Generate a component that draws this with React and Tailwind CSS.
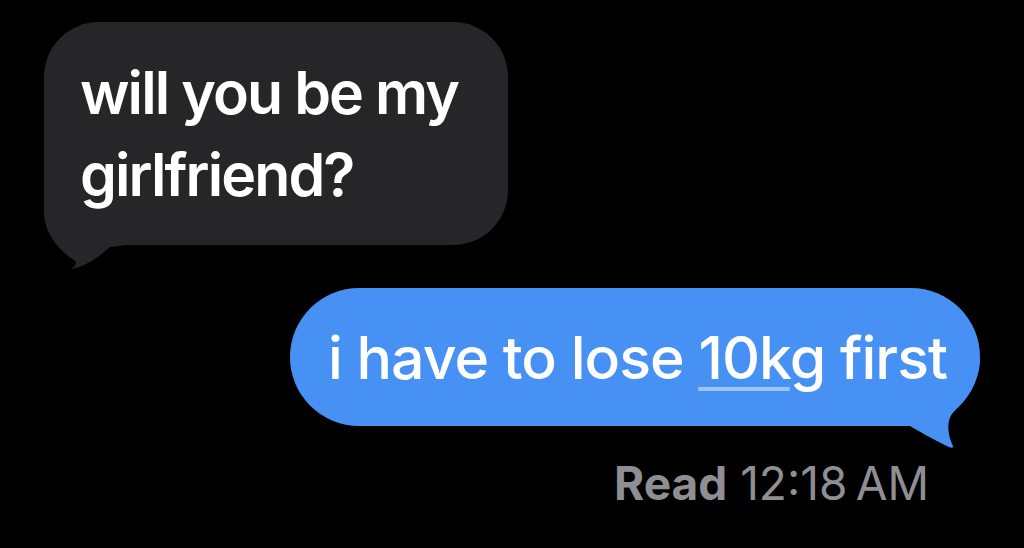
export default function App() {
  const font = { fontFamily: "Inter, 'Noto Sans', 'Liberation Sans', sans-serif" };
  return (
    <div className="w-[1024px] h-[548px] bg-black overflow-hidden flex flex-col" style={font}>
      <div className="pl-[44px] pt-[22px]">
        <div className="relative w-[464px] h-[223px] bg-[#262628] rounded-[55px] pl-[36px] pt-[30px]">
          <svg className="absolute left-0 top-[148px]" width="82" height="100" viewBox="0 0 82 100">
            <path d="M0,0 L0,42 C0,62 14,80 30,90 C34,93 31,98 25,99 C40,98 55,87 66,77 L82,75 L82,0 Z" fill="#262628" />
          </svg>
          <p className="relative text-white text-[59px] leading-[82px] font-semibold tracking-[-1.9px]">
            will you be my
            <br />
            girlfriend?
          </p>
        </div>
      </div>
      <div className="flex justify-end pr-[44px] mt-[43px]">
        <div className="relative w-[690px] h-[138px] bg-[#4791f5] rounded-[69px] pl-[38px] pt-[35px]">
          <svg className="absolute left-[610px] top-[52px]" width="82" height="112" viewBox="0 0 82 112">
            <path d="M0,17 L80,17 C80,45 62,62 52,74 C46,82 48,96 53,106 C54,108 51,108 49,107 C38,102 22,93 10,86 L0,86 Z" fill="#4791f5" />
          </svg>
          <p className="relative text-white text-[59px] leading-[70px] font-medium tracking-[-1px] whitespace-nowrap">
            i have to lose{" "}
            <span className="underline decoration-[#9fc4f8] decoration-[4px] underline-offset-[8px]">10k</span>g first
          </p>
        </div>
      </div>
      <div className="flex justify-end pr-[95px] mt-[34px]">
        <p className="text-[#8e8e93] text-[46px] leading-[46px] whitespace-nowrap">
          <span className="font-bold">Read</span> 12:18{"\u202F"}AM
        </p>
      </div>
    </div>
  );
}
